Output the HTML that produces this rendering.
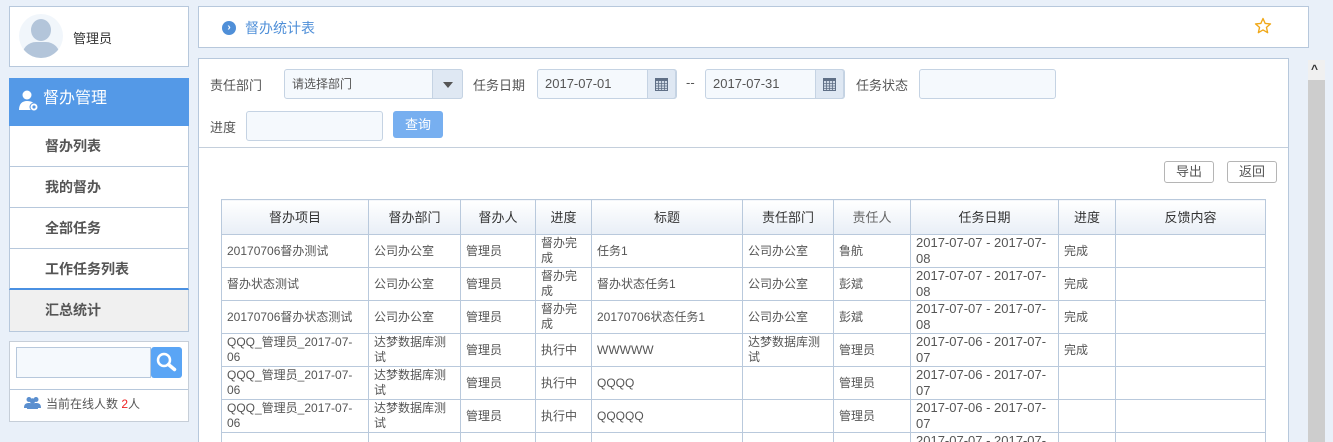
<!DOCTYPE html><html><head><meta charset="utf-8"><style>
*{box-sizing:border-box;margin:0;padding:0}
html,body{width:1333px;height:442px;overflow:hidden}
body{background:#e9f0f9;font-family:"Liberation Sans","Noto Sans CJK SC",sans-serif;font-size:13px;color:#555;position:relative}
.abs{position:absolute}
.box{background:#fff;border:1px solid #b7c8dc}
.mi{position:absolute;left:9px;width:180px;height:41px;background:#fff;border-left:1px solid #b7c8dc;border-right:1px solid #b7c8dc;border-bottom:1px solid #b7c8dc;font-weight:bold;font-size:14px;color:#555;padding-left:35px;line-height:40px}
.inp{position:absolute;height:30px;background:#f5f9fd;border:1px solid #c5d3e3;border-radius:3px;font-size:13px;color:#555;line-height:28px;padding-left:7px}
.lbl{position:absolute;font-size:13px;color:#555}
.cal{position:absolute;width:29px;height:30px;background:#dfe8f3;border:1px solid #c5d3e3;border-radius:0 3px 3px 0}
table{position:absolute;left:22px;top:140px;border-collapse:collapse;table-layout:fixed;font-size:12px;color:#555}
td,th{border:1px solid #b9c9dc;padding:0 5px;line-height:15px;height:33px;vertical-align:middle;text-align:left;font-weight:normal;overflow:hidden}
th{height:35px;text-align:center;font-size:13px;color:#333;background:linear-gradient(#fff,#e8eef6)}
td.d{font-size:13px;line-height:16px}
.btn{position:absolute;height:22px;border:1px solid #b5b5b5;border-radius:3px;background:#fff;font-size:13px;line-height:20px;text-align:center;color:#555}
</style></head><body>
<div class="abs box" style="left:9px;top:6px;width:180px;height:61px">
<div class="abs" style="left:9px;top:7px;width:44px;height:44px;border-radius:50%;background:#f1f6fb;overflow:hidden">
<div class="abs" style="left:12px;top:5px;width:20px;height:22px;border-radius:50%;background:#b3c5da"></div>
<div class="abs" style="left:3px;top:28px;width:38px;height:20px;border-radius:14px 14px 0 0;background:#b3c5da"></div></div>
<div class="abs" style="left:63px;top:21px;font-size:13px;color:#333">管理员</div></div>
<div class="abs" style="left:9px;top:78px;width:180px;height:48px;background:#5499e7;color:#fff;font-size:16px;line-height:42px;padding-left:34px">督办管理
<svg class="abs" style="left:10px;top:12px" width="20" height="22" viewBox="0 0 20 22"><circle cx="8" cy="5" r="4.5" fill="#fff"/><path d="M0 20c0-6 3-9 8-9s7 2 8 4v5z" fill="#fff"/><circle cx="15" cy="17" r="4" fill="#fff" stroke="#5499e7" stroke-width="1"/><circle cx="15" cy="17" r="1.6" fill="#5499e7"/></svg></div>
<div class="mi" style="top:126px">督办列表</div>
<div class="mi" style="top:167px">我的督办</div>
<div class="mi" style="top:208px">全部任务</div>
<div class="mi" style="top:249px;border-bottom:2px solid #4a90e2">工作任务列表</div>
<div class="mi" style="top:290px;height:42px;background:#f0f0f0">汇总统计</div>
<div class="abs" style="left:9px;top:341px;width:180px;height:81px;background:#fff;border:1px solid #c6ced8">
<div class="abs" style="left:6px;top:5px;width:135px;height:31px;background:#f5f9fd;border:1px solid #b7c8dc"></div>
<div class="abs" style="left:141px;top:5px;width:31px;height:31px;background:#5aa5f5;border-radius:3px"><svg width="31" height="31"><circle cx="13" cy="13" r="6" fill="none" stroke="#fff" stroke-width="2.5"/><path d="M17.5 17.5l6 5" stroke="#fff" stroke-width="3.5" stroke-linecap="round"/></svg></div>
<div class="abs" style="left:0;top:47px;width:178px;border-top:1px solid #b7c8dc"></div>
<svg class="abs" style="left:14px;top:54px" width="17" height="13" viewBox="0 0 17 13"><circle cx="5" cy="3.5" r="2.5" fill="#5b8fcf"/><circle cx="12" cy="3.5" r="2.5" fill="#5b8fcf"/><circle cx="8.5" cy="5" r="2.7" fill="#5b8fcf"/><path d="M0 12c0-4 2-5 5-5s5 1 5 5zM7 12c0-4 2-5 5-5s5 1 5 5z" fill="#5b8fcf"/><path d="M3 13c0-4 2-5.5 5.5-5.5S14 9 14 13z" fill="#5b8fcf"/></svg>
<div class="abs" style="left:36px;top:53px;font-size:12px;color:#555">当前在线人数 <span style="color:#e22">2</span>人</div></div>

<div class="abs box" style="left:198px;top:6px;width:1111px;height:42px">
<div class="abs" style="left:23px;top:14px;width:14px;height:14px;border-radius:50%;background:#4f8fd8;color:#fff;font-size:10px;line-height:13px;text-align:center;font-weight:bold">›</div>
<div class="abs" style="left:46px;top:11px;font-size:14px;color:#4f8fd8">督办统计表</div>
<svg class="abs" style="left:1055px;top:10px" width="18" height="18" viewBox="0 0 24 24"><path d="M12 2l2.9 6.6 7.1.6-5.4 4.7 1.6 7-6.2-3.7-6.2 3.7 1.6-7L2 9.2l7.1-.6z" fill="none" stroke="#f0a818" stroke-width="1.8" stroke-linejoin="round"/></svg></div>

<div class="abs" style="left:198px;top:58px;width:1091px;height:384px;background:#fff;border:1px solid #b7c8dc;border-bottom:none;overflow:hidden">
<table>
<colgroup><col style="width:147px"><col style="width:92px"><col style="width:75px"><col style="width:56px"><col style="width:151px"><col style="width:91px"><col style="width:77px"><col style="width:148px"><col style="width:57px"><col style="width:150px"></colgroup>
<tr><th>督办项目</th><th>督办部门</th><th>督办人</th><th>进度</th><th>标题</th><th>责任部门</th><th style="color:#666">责任人</th><th>任务日期</th><th>进度</th><th>反馈内容</th></tr>
<tr><td>20170706督办测试</td><td>公司办公室</td><td>管理员</td><td>督办完成</td><td>任务1</td><td>公司办公室</td><td>鲁航</td><td class="d">2017-07-07 - 2017-07-<br>08</td><td>完成</td><td></td></tr>
<tr><td>督办状态测试</td><td>公司办公室</td><td>管理员</td><td>督办完成</td><td>督办状态任务1</td><td>公司办公室</td><td>彭斌</td><td class="d">2017-07-07 - 2017-07-<br>08</td><td>完成</td><td></td></tr>
<tr><td>20170706督办状态测试</td><td>公司办公室</td><td>管理员</td><td>督办完成</td><td>20170706状态任务1</td><td>公司办公室</td><td>彭斌</td><td class="d">2017-07-07 - 2017-07-<br>08</td><td>完成</td><td></td></tr>
<tr><td>QQQ_管理员_2017-07-06</td><td>达梦数据库测试</td><td>管理员</td><td>执行中</td><td>WWWWW</td><td>达梦数据库测试</td><td>管理员</td><td class="d">2017-07-06 - 2017-07-<br>07</td><td>完成</td><td></td></tr>
<tr><td>QQQ_管理员_2017-07-06</td><td>达梦数据库测试</td><td>管理员</td><td>执行中</td><td>QQQQ</td><td></td><td>管理员</td><td class="d">2017-07-06 - 2017-07-<br>07</td><td></td><td></td></tr>
<tr><td>QQQ_管理员_2017-07-06</td><td>达梦数据库测试</td><td>管理员</td><td>执行中</td><td>QQQQQ</td><td></td><td>管理员</td><td class="d">2017-07-06 - 2017-07-<br>07</td><td></td><td></td></tr>
<tr><td></td><td></td><td></td><td></td><td></td><td></td><td></td><td class="d">2017-07-07 - 2017-07-<br>08</td><td></td><td></td></tr>
</table>
</div>
<div class="abs" style="left:199px;top:147px;width:1089px;border-top:1px solid #c4cfdc"></div>
<div class="lbl" style="left:210px;top:75px">责任部门</div>
<div class="inp" style="left:284px;top:69px;width:179px;font-size:12px">请选择部门</div>
<div class="cal" style="left:432px;top:69px;width:31px"><div class="abs" style="left:10px;top:12px;border-left:5px solid transparent;border-right:5px solid transparent;border-top:6px solid #555"></div></div>
<div class="lbl" style="left:473px;top:75px">任务日期</div>
<div class="inp" style="left:537px;top:69px;width:140px">2017-07-01</div>
<div class="cal" style="left:647px;top:69px"><svg width="27" height="28"><rect x="7" y="8" width="13" height="13" fill="#5f6f86"/><rect x="8" y="11" width="11" height="9" fill="#cfd9e6"/><path d="M8 13.5h11M8 16h11M8 18.5h11M10.5 11v9M13.5 11v9M16.5 11v9" stroke="#5f6f86" stroke-width=".8"/></svg></div>
<div class="lbl" style="left:686px;top:75px">--</div>
<div class="inp" style="left:705px;top:69px;width:140px">2017-07-31</div>
<div class="cal" style="left:815px;top:69px"><svg width="27" height="28"><rect x="7" y="8" width="13" height="13" fill="#5f6f86"/><rect x="8" y="11" width="11" height="9" fill="#cfd9e6"/><path d="M8 13.5h11M8 16h11M8 18.5h11M10.5 11v9M13.5 11v9M16.5 11v9" stroke="#5f6f86" stroke-width=".8"/></svg></div>
<div class="lbl" style="left:856px;top:75px">任务状态</div>
<div class="inp" style="left:919px;top:69px;width:137px"></div>
<div class="lbl" style="left:210px;top:117px">进度</div>
<div class="inp" style="left:246px;top:111px;width:137px"></div>
<div class="abs" style="left:393px;top:111px;width:50px;height:27px;background:#77aff0;border-radius:3px;color:#fff;font-size:13px;line-height:27px;text-align:center">查询</div>
<div class="btn" style="left:1164px;top:161px;width:50px">导出</div>
<div class="btn" style="left:1227px;top:161px;width:50px">返回</div>
<div class="abs" style="left:1308px;top:60px;width:17px;height:382px;background:#f0f0f0"></div>
<div class="abs" style="left:1308px;top:80px;width:17px;height:362px;background:#cdcdcd"></div>
<div class="abs" style="left:1311px;top:62px;font-size:12px;color:#333;font-weight:bold">^</div>
</body></html>
